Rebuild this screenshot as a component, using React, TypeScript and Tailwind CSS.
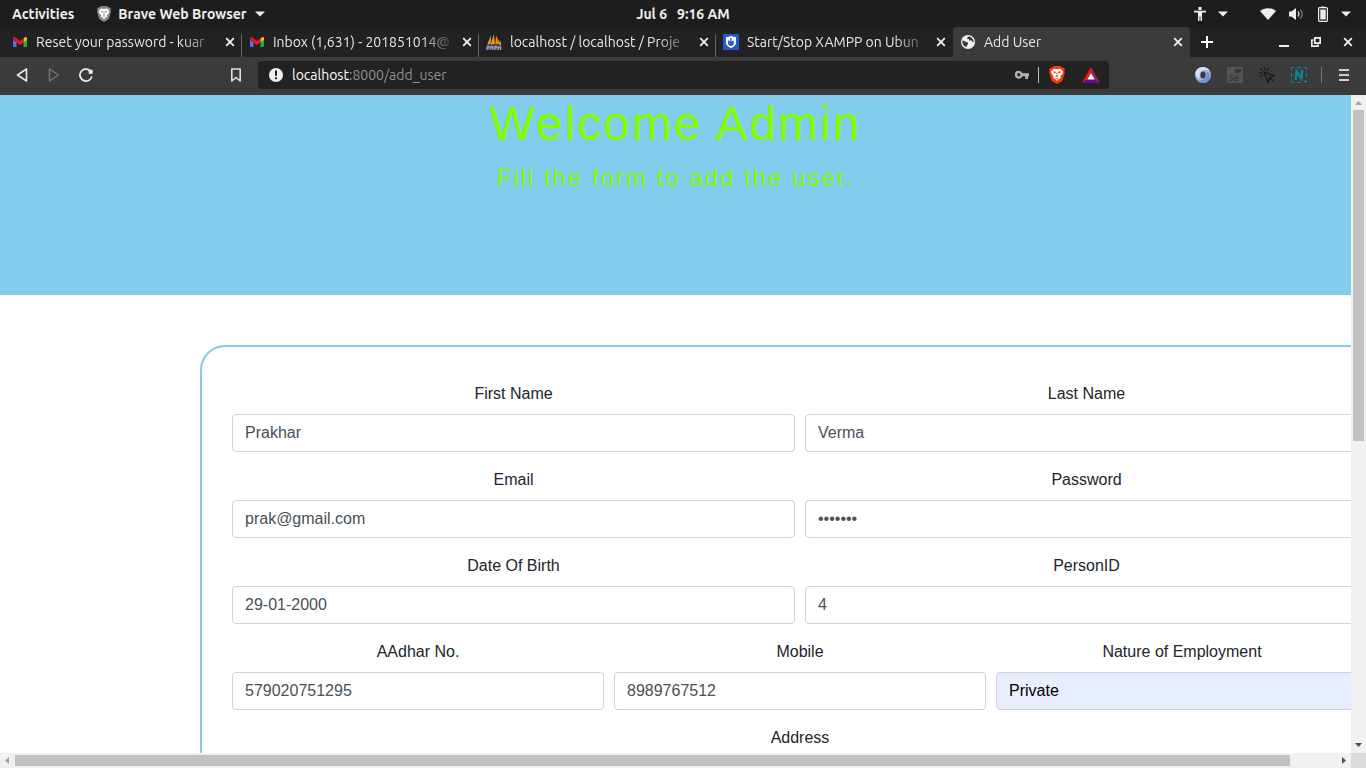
import React, { useId } from "react";

type IconProps = { className?: string };

function GmailIcon() {
  return (
    <svg viewBox="0 0 16 16" className="size-4 shrink-0" aria-hidden="true">
      <path d="M1 4.5v7.3c0 .7.4 1.2 1.2 1.2h2.300V7.500z" fill="#5a6bf0" />
      <path d="M15 4.500v7.300c0 .7-.4 1.200-1.200 1.200h-2.300V7.500z" fill="#12b347" />
      <path d="M11.500 4.500 13 3.300c.9-.6 2 0 2 1.200v1.200l-3.500 2.800z" fill="#fcbd06" />
      <path d="M1 5.700V4.500c0-1.200 1.200-1.800 2.100-1.200L8 7l3.500-2.600v4L8 11 4.500 8.400z" fill="#f2112b" />
      <path d="M1 5.700V4.500c0-1.200 1.100-1.800 2-1.200l1.500 1.200v4z" fill="#c5163a" />
    </svg>
  );
}

function SailIcon() {
  return (
    <svg viewBox="0 0 16 16" className="size-4 shrink-0" aria-hidden="true">
      <path d="M5 1 1.300 10.500h3.200z" fill="#d8a55c" />
      <path d="M7.800 0 4.500 10.800 9 10z" fill="#f59300" />
      <path d="M10 1.500 9.300 10.500l4.900-.8z" fill="#f08600" />
      <path d="M14 6l1.200 5-2-.3z" fill="#c9c2b8" />
      <path d="M.5 10.800h15V16H.5z" fill="#4d4970" />
      <path d="M1 16v-3.500h2V14H1M4.800 12v3.500M6.800 12v3.500M4.800 13.700h2M8.800 16v-3.500h2V14h-2M12.300 16v-3.500l1.200 1.500 1.200-1.500V16" fill="none" stroke="#b5afd6" strokeWidth=".9" />
    </svg>
  );
}

function ShieldHandIcon() {
  return (
    <svg viewBox="0 0 16 16" className="size-4 shrink-0" aria-hidden="true">
      <path d="M0 0h16v16H0z" fill="#265bc7" />
      <path d="M3 3c2 0 3.500-.3 5-1 1.500.7 3 1 5 1v5.500c0 2.500-2 4.500-5 5.500-3-1-5-3-5-5.500z" fill="#fff" />
      <path d="M7.200 4h1.300v3.500l.8-.8 1.200-.2.300 2.500c0 1.800-1.100 3-2.700 3S5 10.700 5 9V6.500l1-.3.500 1.300h.7z" fill="#265bc7" />
    </svg>
  );
}

function GlobeIcon() {
  return (
    <svg viewBox="0 0 16 16" className="size-4 shrink-0" aria-hidden="true">
      <circle cx="8" cy="8" r="7" fill="#f1f1f1" />
      <path d="M2.500 6.500 5 7.200c1 .3 1.200 1 2.200 1.100.9.100 1.300.7.800 1.500-.5.700-.6 1.600-1.200 2.400L6 13C4 12.300 2.600 10.500 2.400 8.500zM8.500 2.200c-.2 1-1.100.8-1.500 1.600-.3.700.1 1.200.9 1.200.9 0 1.300.5 1.200 1.200.9.900 2.200-.2 2.900.5.500.5.200 1.300 1 1.800l.7.100c0-3-1.700-5.500-4.400-6.200z" fill="#3b3b3b" />
    </svg>
  );
}

function LionIcon({ className, shield, face }: IconProps & { shield: string; face: string }) {
  return (
    <svg viewBox="0 0 16 18" className={className} aria-hidden="true">
      <path d="M4.500 0h7l1.700 1.700 1.500-.1L16 3.700l-.6 1.700.4 1.300-2.200 7.200c-.2.700-.6 1.100-1.200 1.500L8 18l-4.400-2.600c-.6-.4-1-.8-1.200-1.500L.2 6.700l.4-1.300L0 3.700l1.300-2.100 1.500.1z" fill={shield} />
      <path d="M4.600 2.800 8 3.300l3.400-.5L14 5.600l-.4 2-2.300 2.900.4 1.600-1.900 1L8 14.900 6.200 13.100l-1.900-1 .4-1.600-2.300-2.900-.4-2z" fill={face} />
      <path d="M3.800 5.800 6.500 5.600l.4 1-.9 1zM12.200 5.800 9.500 5.600l-.4 1 .9 1zM7.400 6.500h1.200l-.3 2.700 1.200.9L8 11.200l-1.500-1.100 1.200-.9zM5.600 11.100 8 12.300l2.400-1.200L8 13.200z" fill={shield} />
    </svg>
  );
}

function CaretDown({ className }: IconProps) {
  return (
    <svg viewBox="0 0 10 6" className={`h-1.5 w-2.5 shrink-0 ${className ?? ""}`} aria-hidden="true">
      <path d="M0 .5h10L5 5.500z" fill="#eeeeee" />
    </svg>
  );
}

function CloseIcon({ className }: IconProps) {
  return (
    <svg viewBox="0 0 10 10" className={className} aria-hidden="true">
      <path d="m1.200 1.200 7.600 7.600m0-7.600-7.600 7.600" stroke="#f0f0f0" strokeWidth="1.800" />
    </svg>
  );
}

function SystemBar() {
  return (
    <header className="grid h-[27px] shrink-0 grid-cols-[1fr_auto_1fr] items-center bg-[#1d1d1d] text-sm font-semibold text-[#eeeeee]">
      <div className="flex items-center pl-3">
        <button type="button">Activities</button>
        <button type="button" className="ml-[22px] flex items-center">
          <LionIcon className="mr-1.5 h-4 w-4" shield="#858585" face="#ffffff" />
          Brave Web Browser
          <CaretDown className="ml-2" />
        </button>
      </div>
      <button type="button" className="flex gap-2.5">
        <span>Jul 6</span>
        <span>9:16 AM</span>
      </button>
      <div className="flex items-center justify-end pr-[15px]">
        <button type="button" aria-label="Accessibility" className="flex items-center gap-3">
          <svg viewBox="0 0 12 14" className="h-3.5 w-3" aria-hidden="true">
            <path d="M4.500 0h3v3h-3zM0 3.700h12v1.700H8V14H6.500V9.500h-1V14H4V5.400H0z" fill="#eeeeee" />
          </svg>
          <CaretDown />
        </button>
        <button type="button" aria-label="System menu" className="ml-8 flex items-center gap-[13px]">
          <svg viewBox="0 0 16 12" className="h-3 w-4" aria-hidden="true">
            <path d="M0 3C4.500-.8 11.500-.8 16 3L8 12z" fill="#eeeeee" />
          </svg>
          <svg viewBox="0 0 16 14" className="h-3.5 w-4" aria-hidden="true">
            <path d="M0 4.500h2.500L7 1v12L2.500 9.500H0z" fill="#eeeeee" />
            <path d="M9 4.500q2 2.500 0 5" fill="none" stroke="#cccccc" strokeWidth="1.300" />
            <path d="M11.200 2.500q4.200 4.500 0 9" fill="none" stroke="#777777" strokeWidth="1.300" />
          </svg>
          <svg viewBox="0 0 10 16" className="h-4 w-2.5" aria-hidden="true">
            <path d="M3 .5h4v1H3z" fill="#eeeeee" />
            <rect x=".6" y="1.600" width="8.800" height="13.800" rx="1" fill="none" stroke="#eeeeee" strokeWidth="1.200" />
            <path d="M2.300 3.500h5.400v10H2.300z" fill="#eeeeee" />
          </svg>
          <CaretDown />
        </button>
      </div>
    </header>
  );
}

type TabInfo = { title: string; icon: React.ReactNode; active?: boolean; last?: boolean };

const tabs: TabInfo[] = [
  { title: "Reset your password - kuar", icon: <GmailIcon /> },
  { title: "Inbox (1,631) - 201851014@", icon: <GmailIcon /> },
  { title: "localhost / localhost / Proje", icon: <SailIcon /> },
  { title: "Start/Stop XAMPP on Ubun", icon: <ShieldHandIcon />, last: true },
  { title: "Add User", icon: <GlobeIcon />, active: true },
];

function BrowserTab({ title, icon, active, last }: TabInfo) {
  return (
    <div className={`flex h-full min-w-0 max-w-[237px] flex-1 ${active ? "rounded-t bg-[#3b3b3b]" : ""}`}>
      <div className="flex min-w-0 flex-1 items-center pl-[7px]">
        <button type="button" className="flex min-w-0 flex-1 items-center gap-2 text-sm text-[#e8e8e8]">
          {icon}
          <span className="min-w-0 flex-1 overflow-hidden text-left whitespace-nowrap [mask-image:linear-gradient(to_right,black_calc(100%-36px),transparent)]">
            {title}
          </span>
        </button>
        <button type="button" aria-label={`Close ${title}`} className="mr-1.5 ml-1.5 shrink-0">
          <CloseIcon className="size-2.5" />
        </button>
      </div>
      <span className={`mt-[7px] w-px ${last || active ? "bg-transparent" : "bg-[#666666]"}`} />
    </div>
  );
}

function TabStrip() {
  return (
    <div className="flex h-[30px] shrink-0 items-center bg-[#222222] pl-[5px]">
      {tabs.map((tab) => (
        <BrowserTab key={tab.title} {...tab} />
      ))}
      <button type="button" aria-label="New tab" className="ml-[11px] shrink-0">
        <svg viewBox="0 0 12 12" className="size-3" aria-hidden="true">
          <path d="M5 0h2v5h5v2H7v5H5V7H0V5h5z" fill="#ffffff" />
        </svg>
      </button>
      <div className="ml-auto flex shrink-0 items-center gap-[22px] pr-[13px]">
        <button type="button" aria-label="Minimize">
          <svg viewBox="0 0 10 10" className="size-2.5" aria-hidden="true">
            <path d="M0 8h10v2H0z" fill="#eeeeee" />
          </svg>
        </button>
        <button type="button" aria-label="Restore">
          <svg viewBox="0 0 10 10" className="size-2.5" aria-hidden="true">
            <path d="M3.800.8h5.400v5.400H3.800zM2.500 3H.8v6.200H7V7.500" fill="none" stroke="#eeeeee" strokeWidth="1.700" />
          </svg>
        </button>
        <button type="button" aria-label="Close window">
          <CloseIcon className="size-2.5" />
        </button>
      </div>
    </div>
  );
}

function Toolbar() {
  return (
    <div className="flex h-[38px] shrink-0 items-center bg-[#3b3b3b] pb-0.5">
      <div className="flex items-center gap-4 pl-3.5">
        <button type="button" aria-label="Back">
          <svg viewBox="0 0 16 16" className="size-4" aria-hidden="true">
            <path d="M12.500 2v12L3.500 8z" fill="none" stroke="#e8e8e8" strokeWidth="1.600" strokeLinejoin="round" />
          </svg>
        </button>
        <button type="button" aria-label="Forward">
          <svg viewBox="0 0 16 16" className="size-4" aria-hidden="true">
            <path d="M3.500 2v12l9-6z" fill="none" stroke="#757575" strokeWidth="1.400" strokeLinejoin="round" />
          </svg>
        </button>
        <button type="button" aria-label="Reload">
          <svg viewBox="0 0 16 16" className="size-4" aria-hidden="true">
            <path d="M13.800 9.500A6 6 0 1 1 11.500 3.200" fill="none" stroke="#eeeeee" strokeWidth="1.700" />
            <path d="M10 6.500 14.500 7V2.500z" fill="#eeeeee" />
            <circle cx="12.500" cy="4.500" r="2" fill="#eeeeee" />
          </svg>
        </button>
      </div>
      <button type="button" aria-label="Bookmark this page" className="ml-[134px]">
        <svg viewBox="0 0 16 16" className="size-4" aria-hidden="true">
          <path d="M3.800 2h8.400v12L8 10.500 3.800 14z" fill="none" stroke="#e0e0e0" strokeWidth="1.600" strokeLinejoin="round" />
        </svg>
      </button>
      <div className="ml-3.5 flex h-7 flex-1 items-center rounded bg-[#222222] pr-[9px] pl-2.5">
        <svg viewBox="0 0 16 16" className="size-4" aria-hidden="true">
          <circle cx="8" cy="8" r="7" fill="#eeeeee" />
          <path d="M7 3.500h2v5.300H7zM7 10.300h2v2H7z" fill="#222222" />
        </svg>
        <button type="button" aria-label="Edit address" className="ml-2 flex-1 text-left text-sm text-[#8f8f8f]">
          <span className="text-white">localhost</span>:8000/add_user
        </button>
        <button type="button" aria-label="Saved passwords">
          <svg viewBox="0 0 16 16" className="size-4" aria-hidden="true">
            <path d="M4.800 3.800a3.900 3.900 0 1 0 3.600 5.400h2.800V12H14V9.200h1V6.300H8.400a3.900 3.900 0 0 0-3.600-2.500z" fill="#b5b5b5" />
            <circle cx="4.800" cy="7.700" r="1.600" fill="#222222" />
          </svg>
        </button>
        <span className="mx-2 h-4 w-px bg-[#c0c0c0]" />
        <button type="button" aria-label="Brave Shields" className="ml-0.5">
          <LionIcon className="h-[18px] w-4" shield="#f93a0c" face="#ffffff" />
        </button>
        <button type="button" aria-label="Brave Rewards" className="ml-[17px]">
          <svg viewBox="0 0 18 16" className="h-4 w-[18px]" aria-hidden="true">
            <path d="M9 0 0 16l5.300-3.500L9 6z" fill="#ff1400" />
            <path d="m9 0 9 16-5.300-3.500L9 6z" fill="#9e1f63" />
            <path d="M0 16h18l-5.300-3.500H5.300z" fill="#5f0f96" />
            <path d="m9 6 3.700 6.500H5.300z" fill="#ffffff" />
          </svg>
        </button>
      </div>
      <div className="flex items-center gap-4 pr-3.5 pl-[86px]">
        <button type="button" aria-label="Focus extension">
          <svg viewBox="0 0 16 16" className="size-4" aria-hidden="true">
            <circle cx="8" cy="8" r="8" fill="#9db6e0" />
            <path d="M4 1.100A8 8 0 0 1 14.500 3.300Q9 1.500 6 4.500 3 7.500 5.500 12 0 10 .5 5.500A8 8 0 0 1 4 1.100z" fill="#d5e1f6" />
            <path d="M12 14.900A8 8 0 0 1 1.500 12.700Q7 14.500 10 11.500 13 8.500 10.500 4 16 6 15.500 10.500A8 8 0 0 1 12 14.900z" fill="#7391cc" />
            <ellipse cx="8" cy="8" rx="2.600" ry="3.600" fill="#3b3b3b" />
          </svg>
        </button>
        <button type="button" aria-label="Recorder extension">
          <svg viewBox="0 0 16 16" className="size-4" aria-hidden="true">
            <path d="M0 0h16v16H0z" fill="#535353" />
            <path d="M8 2h4v1l2-1v4l-2-1v1H8z" fill="#363636" />
            <text x="1.500" y="14" fontSize="9" fontFamily="Noto Sans" fontWeight="600" fill="#363636">Se</text>
          </svg>
        </button>
        <button type="button" aria-label="Click extension">
          <svg viewBox="0 0 16 16" className="size-4" aria-hidden="true">
            <path d="m5 5 10 3.800-4.300 1.700L9 15z" fill="none" stroke="#171717" strokeWidth="1.300" />
            <path d="m10.500 10.500 4 4M5.500 0v3M1.500 1.500l2 2M0 5.700h3M9.500 1.500l-2 2M1.500 9.500l2-2" stroke="#171717" strokeWidth="1.200" />
          </svg>
        </button>
        <button type="button" aria-label="Capture extension">
          <svg viewBox="0 0 16 16" className="size-4" aria-hidden="true">
            <path d="M.5 3.500v-3h3M6 .5h4M12.500.5h3v3M15.500 6v4M.5 6v4M.5 12.500v3h3M6 15.500h4M13 14.500h3M14.500 13v3" fill="none" stroke="#078899" strokeWidth="1" />
            <path d="M4.800 13 5.600 4.500 10.300 11.500 11.200 3" fill="none" stroke="#078899" strokeWidth="2.300" />
          </svg>
        </button>
        <div className="flex items-center gap-3.5">
          <span className="-ml-0.5 h-4 w-px bg-[#777777]" />
          <button type="button" aria-label="Browser menu">
            <svg viewBox="0 0 16 16" className="size-4" aria-hidden="true">
              <path d="M3 2h10v2H3zM3 7h10v2H3zM3 12h10v2H3z" fill="#cfcfcf" />
            </svg>
          </button>
        </div>
      </div>
    </div>
  );
}

type FieldProps = { label: string; value: string; type?: string; filled?: boolean };

function Field({ label, value, type = "text", filled }: FieldProps) {
  const id = useId();
  return (
    <div className="flex min-w-0 flex-1 flex-col gap-2">
      <label htmlFor={id} className="text-center">
        {label}
      </label>
      <input
        id={id}
        type={type}
        defaultValue={value}
        className={`h-[38px] w-full rounded border border-[#ced4da] px-3 outline-none ${
          filled ? "bg-[#e8eefe] text-black" : "bg-white text-[#495057]"
        }`}
      />
    </div>
  );
}

function FieldRow({ children }: { children: React.ReactNode }) {
  return <div className="flex gap-2.5">{children}</div>;
}

function AddUserPage() {
  return (
    <main className="min-w-0 flex-1 overflow-hidden bg-white font-['Liberation_Sans',Arial,sans-serif] text-base text-[#212529]">
      <section className="h-[200px] bg-[#82ccee] text-center tracking-[2px] text-[#7fff00]">
        <h1 className="mb-2 text-5xl leading-[58px]">Welcome Admin</h1>
        <p className="text-2xl leading-[34px]">Fill the form to add the user.</p>
      </section>
      <form className="mt-[50px] ml-[200px] flex min-w-[1200px] flex-col gap-4 rounded-[25px] border-2 border-[#82ccee] px-[30px] py-[35px]">
        <FieldRow>
          <Field label="First Name" value="Prakhar" />
          <Field label="Last Name" value="Verma" />
        </FieldRow>
        <FieldRow>
          <Field label="Email" value="prak@gmail.com" type="email" />
          <Field label="Password" value="1234567" type="password" />
        </FieldRow>
        <FieldRow>
          <Field label="Date Of Birth" value="29-01-2000" />
          <Field label="PersonID" value="4" />
        </FieldRow>
        <FieldRow>
          <Field label="AAdhar No." value="579020751295" />
          <Field label="Mobile" value="8989767512" />
          <Field label="Nature of Employment" value="Private" filled />
        </FieldRow>
        <FieldRow>
          <Field label="Address" value="" />
        </FieldRow>
      </form>
    </main>
  );
}

function ScrollArrow({ d, fill }: { d: string; fill: string }) {
  return (
    <svg viewBox="0 0 15 15" className="size-[15px] shrink-0" aria-hidden="true">
      <path d={d} fill={fill} />
    </svg>
  );
}

export default function App() {
  return (
    <div className="flex h-screen flex-col overflow-hidden font-['Ubuntu','Noto_Sans',sans-serif]">
      <SystemBar />
      <TabStrip />
      <Toolbar />
      <div className="flex min-h-0 flex-1">
        <AddUserPage />
        <div className="flex w-[15px] shrink-0 flex-col items-center bg-[#f1f1f1]">
          <ScrollArrow d="M4 10h7L7.500 6z" fill="#a3a3a3" />
          <div className="min-h-0 w-full flex-1 px-0.5">
            <div className="h-[52.7%] bg-[#c1c1c1]" />
          </div>
          <ScrollArrow d="M4 5h7L7.500 9z" fill="#505050" />
        </div>
      </div>
      <div className="flex h-[15px] shrink-0 bg-[#f1f1f1]">
        <ScrollArrow d="M9 4v7L5 7.500z" fill="#a3a3a3" />
        <div className="flex-1 py-0.5">
          <div className="h-full w-[96.5%] bg-[#c1c1c1]" />
        </div>
        <ScrollArrow d="M6 4v7l4-3.500z" fill="#505050" />
        <div className="w-[15px] bg-[#dcdcdc]" />
      </div>
    </div>
  );
}
